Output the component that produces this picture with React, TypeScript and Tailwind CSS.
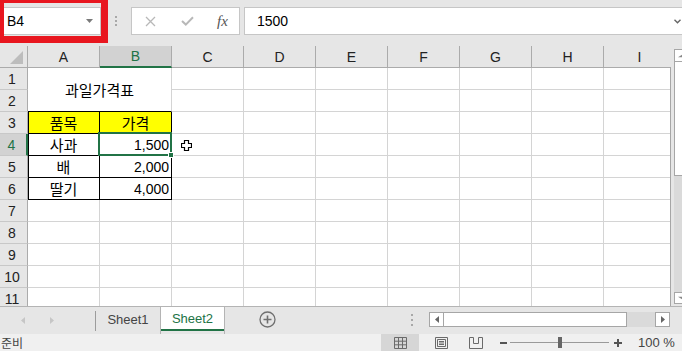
import React from 'react';

const COLS = ['A', 'B', 'C', 'D', 'E', 'F', 'G', 'H', 'I'];
const ROWS = [1, 2, 3, 4, 5, 6, 7, 8, 9, 10, 11];

const TABLE: Record<number, [string, string]> = {
  3: ['품목', '가격'],
  4: ['사과', '1,500'],
  5: ['배', '2,000'],
  6: ['딸기', '4,000'],
};

const GRID = 'border-r border-b border-[#d4d4d4]';
const KO = "font-['Noto_Sans_CJK_KR',sans-serif] text-[15px] leading-none text-black";

function RowHeader({ n }: { n: number }) {
  const sel = n === 4;
  return (
    <div
      className={
        sel
          ? 'flex items-center justify-center pr-[3px] text-[14px] leading-none bg-[#d2d2d2] text-[#217346] border-b border-b-[#c8c8c8] border-r-2 border-r-[#217346]'
          : 'flex items-center justify-center pr-[3px] text-[14px] leading-none bg-[#e6e6e6] text-[#222] border-b border-b-[#c8c8c8] border-r border-r-[#ababab]'
      }
    >
      {n}
    </div>
  );
}

function TableCells({ r }: { r: number }) {
  const [name, price] = TABLE[r];
  const fill = r === 3 ? 'bg-[#ffff00]' : 'bg-white';
  return (
    <>
      <div className={`flex items-center justify-center border-r border-b border-black shadow-[inset_1px_0_0_#000] ${fill} ${KO}`}>
        {name}
      </div>
      {r === 3 ? (
        <div className={`flex items-center justify-center border-r border-b border-black ${fill} ${KO}`}>{price}</div>
      ) : (
        <div className="relative flex items-center justify-end pr-[2px] text-[14px] leading-none text-black border-r border-b border-black bg-white">
          {price}
          {r === 4 && (
            <>
              <div className="absolute -left-[2px] -top-[2px] -right-[1px] -bottom-[1px] border-2 border-[#217346] z-10" />
              <div className="absolute -right-[3px] -bottom-[3px] w-[6px] h-[6px] bg-[#217346] border border-white z-20" />
            </>
          )}
        </div>
      )}
    </>
  );
}

function Sheet() {
  return (
    <div className="grid grid-cols-[28px_repeat(9,72px)] auto-rows-[22px] w-[676px] bg-white">
      <div className="flex items-end justify-end pr-[4px] pb-[3px] bg-[#e6e6e6] border-r border-b border-[#ababab]">
        <svg width="13" height="13" viewBox="0 0 13 13"><polygon points="13,0 13,13 0,13" fill="#bdbdbd" /></svg>
      </div>
      {COLS.map((c) => (
        <div
          key={c}
          className={
            c === 'B'
              ? 'flex items-center justify-center text-[14px] leading-none bg-[#d2d2d2] text-[#217346] border-r border-r-[#ababab] border-b-2 border-b-[#217346]'
              : 'flex items-center justify-center text-[14px] leading-none bg-[#e6e6e6] text-[#222] border-r border-r-[#ababab] border-b border-b-[#ababab]'
          }
        >
          {c}
        </div>
      ))}
      {ROWS.map((r) => (
        <React.Fragment key={r}>
          <RowHeader n={r} />
          {r === 1 && (
            <div className={`col-span-2 row-span-2 flex items-center justify-center border-r border-r-[#d4d4d4] border-b border-b-black ${KO}`}>
              과일가격표
            </div>
          )}
          {TABLE[r] && <TableCells r={r} />}
          {(r <= 6 ? COLS.slice(2) : COLS).map((c) => (
            <div key={c} className={GRID} />
          ))}
        </React.Fragment>
      ))}
    </div>
  );
}

export default function App() {
  return (
    <div className="relative w-[682px] h-[351px] overflow-hidden bg-[#e6e6e6] font-['Liberation_Sans','Noto_Sans_CJK_KR',sans-serif] text-[#222]">
      {/* formula bar */}
      <div className="h-[46px] flex items-start pt-[7px]">
        <div className="w-[101px] h-[28px] bg-white border border-[#c6c6c6] flex items-center justify-between pl-[6px] pr-[7px]">
          <span className="text-[14px] leading-none text-black">B4</span>
          <svg width="7" height="4" viewBox="0 0 7 4"><polygon points="0,0 7,0 3.5,4" fill="#7a7a7a" /></svg>
        </div>
        <div className="w-[30px] h-[28px] flex flex-col items-center justify-center gap-[2px]">
          <div className="w-[2px] h-[2px] bg-[#a8a8a8]" />
          <div className="w-[2px] h-[2px] bg-[#a8a8a8]" />
          <div className="w-[2px] h-[2px] bg-[#a8a8a8]" />
        </div>
        <div className="w-[109px] h-[28px] bg-white border border-[#c6c6c6] flex items-center">
          <div className="w-[37px] flex justify-center">
            <svg width="11" height="11" viewBox="0 0 11 11"><path d="M1 1L10 10M10 1L1 10" stroke="#b8b8b8" strokeWidth="1.3" /></svg>
          </div>
          <div className="w-[37px] flex justify-center">
            <svg width="13" height="10" viewBox="0 0 13 10"><path d="M1 5L4.8 8.6L12 1.2" stroke="#b8b8b8" strokeWidth="2" fill="none" /></svg>
          </div>
          <div className="w-[33px] flex justify-center">
            <span className="font-['Liberation_Serif',serif] italic text-[15px] leading-none text-[#555]">fx</span>
          </div>
        </div>
        <div className="ml-[4px] flex-1 h-[28px] bg-white border border-r-0 border-[#c6c6c6] flex items-center justify-between pl-[12px] pr-[1px]">
          <span className="text-[14px] leading-none text-black">1500</span>
          <svg width="7" height="5" viewBox="0 0 7 5"><path d="M0.5 0.8L3.5 3.8L6.5 0.8" stroke="#666" strokeWidth="1.4" fill="none" /></svg>
        </div>
      </div>

      {/* red annotation box */}
      <div className="absolute -left-[3px] -top-[4px] w-[111px] h-[47px] border-[7px] border-[#e8161f]" />

      {/* sheet area */}
      <div className="flex h-[260px]">
        <div className="relative w-[670px] h-[260px] overflow-hidden bg-white">
          <Sheet />
          <svg className="absolute left-[181px] top-[94px]" width="11" height="11" viewBox="0 0 11 11">
            <polygon points="3.5,0.5 7.5,0.5 7.5,3.5 10.5,3.5 10.5,7.5 7.5,7.5 7.5,10.5 3.5,10.5 3.5,7.5 0.5,7.5 0.5,3.5 3.5,3.5" fill="#fff" stroke="#000" strokeWidth="1.2" />
          </svg>
        </div>
        <div className="w-[1px] flex flex-col">
          <div className="h-[21px] bg-[#e6e6e6]" />
          <div className="flex-1 bg-[#a6a6a6]" />
        </div>
        <div className="w-[11px] pl-[3px] pt-[3px] flex flex-col bg-[#e6e6e6]">
          <div className="h-[13px] bg-white border-l border-t border-b border-[#a6a6a6] flex items-center pl-[3px]">
            <svg width="6" height="4" viewBox="0 0 6 4"><polygon points="0,4 6,4 6,0" fill="#888" /></svg>
          </div>
          <div className="h-[114px] bg-white border-l border-b border-[#a6a6a6]" />
          <div className="h-[116px] bg-[#dadada]" />
          <div className="h-[12px] bg-white border-l border-t border-b border-[#a6a6a6] flex items-center pl-[3px]">
            <svg width="6" height="4" viewBox="0 0 6 4"><polygon points="0,0 6,0 6,4" fill="#888" /></svg>
          </div>
        </div>
      </div>

      {/* sheet tabs */}
      <div className="h-[28px] flex items-stretch border-t border-[#b4b4b4] bg-[#e6e6e6]">
        <div className="w-[95px] flex items-center">
          <div className="w-[21px]" />
          <svg width="4" height="7" viewBox="0 0 4 7"><polygon points="4,0 4,7 0,3.5" fill="#c6c6c6" /></svg>
          <div className="w-[25px]" />
          <svg width="4" height="7" viewBox="0 0 4 7"><polygon points="0,0 0,7 4,3.5" fill="#c6c6c6" /></svg>
        </div>
        <div className="flex items-center"><div className="w-[1px] h-[20px] bg-[#9c9c9c]" /></div>
        <div className="w-[64px] flex items-center justify-center pb-[3px] text-[13px] leading-none text-[#444]">Sheet1</div>
        <div className="w-[65px] flex flex-col bg-white border-x border-[#b4b4b4]">
          <div className="flex-1 flex items-center justify-center text-[13px] leading-none text-[#217346]">Sheet2</div>
          <div className="h-[2px] bg-[#217346]" />
          <div className="h-[3px] bg-[#e6e6e6]" />
        </div>
        <div className="w-[84px] flex items-center justify-center pb-[2px]">
          <svg width="17" height="17" viewBox="0 0 17 17">
            <circle cx="8.5" cy="8.5" r="7.5" fill="none" stroke="#707070" strokeWidth="1.3" />
            <path d="M8.5 4.5V12.5M4.5 8.5H12.5" stroke="#707070" strokeWidth="1.6" />
          </svg>
        </div>
        <div className="w-[104px] flex flex-col items-end justify-center gap-[3px] pb-[2px]">
          <div className="w-[2px] h-[2px] bg-[#a8a8a8]" />
          <div className="w-[2px] h-[2px] bg-[#a8a8a8]" />
          <div className="w-[2px] h-[2px] bg-[#a8a8a8]" />
        </div>
        <div className="w-[16px]" />
        <div className="flex items-center pb-[2px]">
          <div className="w-[241px] h-[15px] flex">
            <div className="w-[15px] bg-white border border-[#a6a6a6] flex items-center justify-center">
              <svg width="4" height="7" viewBox="0 0 4 7"><polygon points="4,0 4,7 0,3.5" fill="#666" /></svg>
            </div>
            <div className="w-[183px] bg-white border-y border-r border-[#a6a6a6]" />
            <div className="w-[28px] bg-[#dadada]" />
            <div className="w-[15px] bg-white border border-[#a6a6a6] flex items-center justify-center">
              <svg width="4" height="7" viewBox="0 0 4 7"><polygon points="0,0 0,7 4,3.5" fill="#666" /></svg>
            </div>
          </div>
        </div>
      </div>

      {/* status bar */}
      <div className="h-[17px] flex items-stretch bg-[#f0f0f0] text-[#444]">
        <div className="w-[381px] flex items-center pl-[1px] font-['Noto_Sans_CJK_KR',sans-serif] text-[12px] leading-none">준비</div>
        <div className="w-[38px] bg-[#d6d6d6] flex items-center justify-center">
          <svg width="13" height="12" viewBox="0 0 13 12">
            <path d="M0.5 0.5H12.5V11.5H0.5ZM4.5 0.5V11.5M8.5 0.5V11.5M0.5 4.2H12.5M0.5 7.8H12.5" fill="none" stroke="#6a6a6a" strokeWidth="1" />
          </svg>
        </div>
        <div className="w-[44px] flex items-center justify-center">
          <svg width="13" height="12" viewBox="0 0 13 12">
            <path d="M0.5 0.5H12.5V11.5H0.5ZM2.5 2.5H10.5V9.5H2.5ZM4 4.5H9M4 6H9M4 7.5H9" fill="none" stroke="#6a6a6a" strokeWidth="1" />
          </svg>
        </div>
        <div className="w-[26px] flex items-center justify-center">
          <svg width="14" height="12" viewBox="0 0 14 12">
            <path d="M0.5 0.5H4.5V6.5H9.5V0.5H13.5V11.5H0.5Z" fill="none" stroke="#6a6a6a" strokeWidth="1" />
          </svg>
        </div>
        <div className="w-[11px]" />
        <div className="flex items-center"><div className="w-[7px] h-[2px] bg-[#555]" /></div>
        <div className="w-[3px]" />
        <div className="w-[99px] flex items-center">
          <div className="w-[48px] h-[1px] bg-[#9a9a9a]" />
          <div className="w-[4px] h-[11px] bg-[#666]" />
          <div className="flex-1 h-[1px] bg-[#9a9a9a]" />
        </div>
        <div className="w-[5px]" />
        <div className="flex items-center">
          <svg width="8" height="8" viewBox="0 0 8 8"><path d="M4 0V8M0 4H8" stroke="#555" strokeWidth="2" /></svg>
        </div>
        <div className="w-[16px]" />
        <div className="flex items-center text-[13px] leading-none">100 %</div>
      </div>
    </div>
  );
}
